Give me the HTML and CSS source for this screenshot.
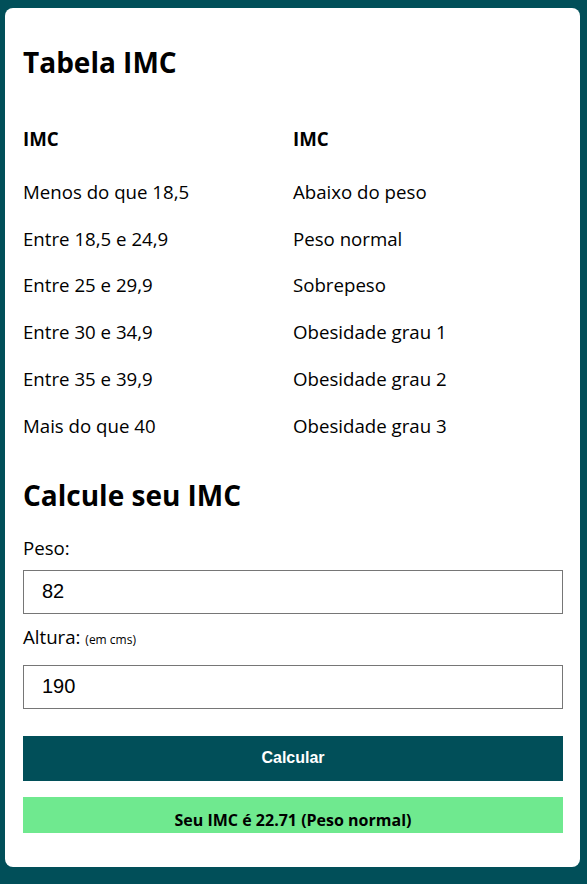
FILE: index.html
```html
<!DOCTYPE html>
<html lang="pt-BR">
<head>
<meta charset="utf-8">
<title>Tabela IMC</title>
<link rel="stylesheet" href="styles.css">
</head>
<body>
<main class="card">
  <h2 class="title">Tabela IMC</h2>
  <div class="table">
    <div class="cell head">IMC</div>
    <div class="cell head">IMC</div>
    <div class="cell">Menos do que 18,5</div>
    <div class="cell">Abaixo do peso</div>
    <div class="cell">Entre 18,5 e 24,9</div>
    <div class="cell">Peso normal</div>
    <div class="cell">Entre 25 e 29,9</div>
    <div class="cell">Sobrepeso</div>
    <div class="cell">Entre 30 e 34,9</div>
    <div class="cell">Obesidade grau 1</div>
    <div class="cell">Entre 35 e 39,9</div>
    <div class="cell">Obesidade grau 2</div>
    <div class="cell">Mais do que 40</div>
    <div class="cell">Obesidade grau 3</div>
  </div>
  <h2 class="title title-calc">Calcule seu IMC</h2>
  <form class="form">
    <label class="label label-peso" for="peso">Peso:</label>
    <input class="input input-peso" id="peso" type="text" value="82">
    <label class="label label-altura" for="altura">Altura: <small class="hint">(em cms)</small></label>
    <input class="input input-altura" id="altura" type="text" value="190">
    <button class="button" type="button">Calcular</button>
    <div class="result">Seu IMC é 22.71 (Peso normal)</div>
  </form>
</main>
</body>
</html>
```
FILE: styles.css
```css
html, body {
  margin: 0;
}
body {
  background: #014f59;
  padding: 8px 7px 17px 5px;
  font-family: "Open Sans", "Noto Sans", sans-serif;
  font-size: 18.67px;
  line-height: 25px;
  color: #000;
}
.card {
  background: #fff;
  border-radius: 8px;
  padding: 35px 17px 34px 18px;
}
.title {
  margin: 0;
  font-size: 28px;
  line-height: 38px;
  font-weight: 700;
}
.table {
  margin-top: 45px;
  display: grid;
  grid-template-columns: 1fr 1fr;
  row-gap: 21.8px;
}
.cell {
  line-height: 25px;
}
.head {
  font-weight: 700;
  padding-bottom: 6px;
}
.title-calc {
  margin-top: 38px;
}
.form {
  display: flex;
  flex-direction: column;
}
.label {
  line-height: 25px;
}
.label-peso {
  margin-top: 21px;
}
.label-altura {
  margin-top: 10px;
}
.hint {
  font-size: 12px;
}
.input {
  box-sizing: border-box;
  width: 100%;
  height: 44px;
  margin: 10px 0 0;
  border: 1px solid #767676;
  border-radius: 0;
  padding: 0 18px;
  font-family: "Liberation Sans", Arial, sans-serif;
  font-size: 20px;
  color: #000;
  background: #fff;
}
.input-altura {
  margin-top: 13px;
}
.button {
  margin-top: 27px;
  height: 45px;
  width: 100%;
  border: none;
  background: #014f59;
  color: #fff;
  font-family: "Liberation Sans", Arial, sans-serif;
  font-weight: 700;
  font-size: 16px;
}
.result {
  margin-top: 16px;
  background: #6fe98f;
  text-align: center;
  font-weight: 700;
  font-size: 16px;
  line-height: 22px;
  padding: 12px 0 2px;
}
```
